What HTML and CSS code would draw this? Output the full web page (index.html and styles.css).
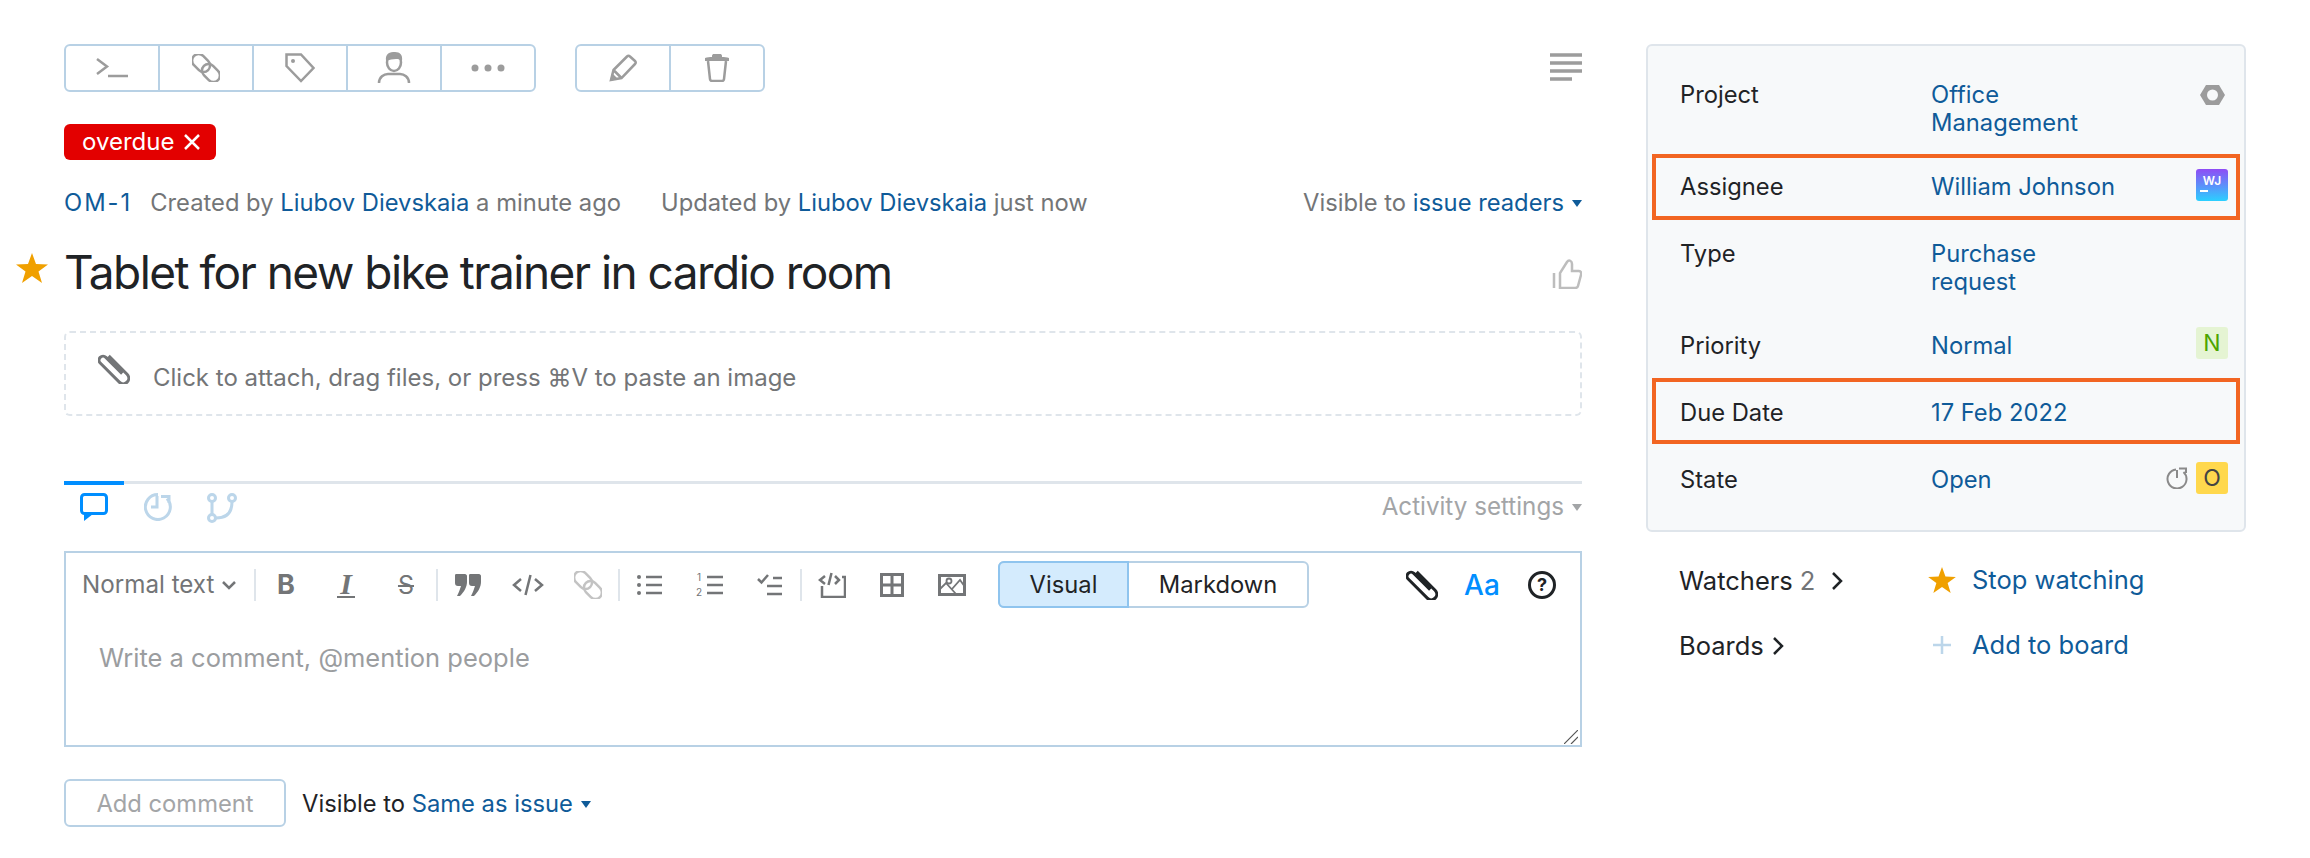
FILE: index.html
```html
<!DOCTYPE html>
<html lang="en">
<head>
<meta charset="utf-8">
<title>Tablet for new bike trainer in cardio room</title>
<link rel="stylesheet" href="styles.css">
</head>
<body>
<div class="page">
  <main class="main">
    <div class="topbar">
      <div class="groups">
        <div class="btn-group">
          <button class="tool"><svg width="32" height="20" viewBox="0 0 32 20"><path class="st" d="M1 1 11 8.500 1 16M12 18H32"/></svg></button>
          <button class="tool"><svg width="28" height="28" viewBox="0 0 28 28"><g class="st" transform="rotate(45 14 14)"><rect x="-3" y="7.500" width="20" height="13" rx="6.500"/><rect x="11" y="7.500" width="20" height="13" rx="6.500"/></g></svg></button>
          <button class="tool"><svg width="30" height="30" viewBox="0 0 30 30"><path class="st" d="M1.500 1.500H16L28.500 15 16 28 1.500 13Z"/><circle class="fl" cx="8" cy="8" r="2"/></svg></button>
          <button class="tool"><svg width="36" height="32" viewBox="0 0 36 32"><ellipse class="st" cx="18" cy="10.500" rx="7" ry="8.500"/><path class="fl" d="M10 9C9 1 14 0 19 0 24 0 27 3 26 9 23 6 16 7 10 9Z"/><path class="st" d="M3 31C3 25 8 22 12 22H24C28 22 33 25 33 31"/></svg></button>
          <button class="tool"><svg width="34" height="8" viewBox="0 0 34 8"><circle class="fl" cx="4" cy="4" r="3.500"/><circle class="fl" cx="17" cy="4" r="3.500"/><circle class="fl" cx="30" cy="4" r="3.500"/></svg></button>
        </div>
        <div class="btn-group">
          <button class="tool"><svg width="28" height="28" viewBox="0 0 28 28"><path class="st" d="M2 26 4.500 16 18 2.500C19 1.500 20 1.500 21 2.500L26 7C27 8 27 9 26 10L12.500 24ZM4.500 16 12.500 24"/><path class="fl" d="M1 27 3 19 9 25Z"/></svg></button>
          <button class="tool"><svg width="24" height="28" viewBox="0 0 24 28"><path class="fl" d="M0 4C2 3 5 3 7 3V2C7 .500 8 0 9 0H15C16 0 17 .500 17 2V3C19 3 22 3 24 4V7H0Z"/><path class="st" d="M3 7 5 25C5 26 6 27 7 27H17C18 27 19 26 19 25L21 7"/></svg></button>
        </div>
      </div>
      <svg class="doc-icon" width="32" height="30" viewBox="0 0 32 30"><path class="st doc-lines" d="M0 2H32M0 10H32M0 18H32M0 26H22"/></svg>
    </div>

    <div class="tags"><span class="tag">overdue<svg width="16" height="16" viewBox="0 0 16 16"><path d="M1 1 15 15M15 1 1 15"/></svg></span></div>

    <div class="meta">
      <a class="link issue-id">OM-1</a>
      <span class="muted created">Created by <a class="link">Liubov Dievskaia</a> a minute ago</span>
      <span class="muted updated">Updated by <a class="link">Liubov Dievskaia</a> just now</span>
      <span class="muted visible">Visible to <a class="link">issue readers</a><i class="caret"></i></span>
    </div>

    <div class="title-row">
      <svg class="star" width="32" height="30" viewBox="0 0 32 30"><polygon points="16,0 20,11 32,11.500 22.500,18.500 26,30 16,23 6,30 9.500,18.500 0,11.500 12,11"/></svg>
      <h1 class="title">Tablet for new bike trainer in cardio room</h1>
      <svg class="like" width="30" height="30" viewBox="0 0 30 30"><path d="M2 14V29M8 29V14L15 3C17 0 20 2 20 5V12H27C29 12 29.500 14 29 16L26 27C25.500 29 24 29 23 29Z"/></svg>
    </div>

    <div class="attach">
      <svg width="32" height="30" viewBox="0 0 32 30"><g transform="rotate(45 16 15) translate(-3 -1.500)"><path class="st st3" d="M6 11H32A5.500 5.500 0 0 1 32 22H5A4 4 0 0 1 5 14H28"/></g></svg>
      <span class="attach-text">Click to attach, drag files, or press ⌘V to paste an image</span>
    </div>

    <div class="tabs">
      <div class="tab-icons">
        <span class="tab tab-active"><svg width="28" height="28" viewBox="0 0 28 28"><rect x="1.500" y="1.500" width="25" height="19" rx="3" fill="none" stroke="#008eff" stroke-width="3"/><path fill="#008eff" d="M4 20V28L13 21Z"/></svg></span>
        <span class="tab"><svg width="28" height="28" viewBox="0 0 28 28"><path class="blue-st" d="M14 1.500A12.500 12.500 0 1 0 23 5.500M17 3.500H25V10M13 3V14H7"/></svg></span>
        <span class="tab"><svg width="30" height="30" viewBox="0 0 30 30"><g class="blue-st"><circle cx="5" cy="5" r="3.500"/><circle cx="25" cy="5" r="3.500"/><circle cx="5" cy="25" r="3.500"/><path d="M5 9V21M25 9C25 20 19 25 9 25"/></g></svg></span>
      </div>
      <span class="activity">Activity settings<i class="caret caret-light"></i></span>
    </div>

    <div class="editor">
      <div class="ed-toolbar">
        <div class="fmt">Normal text<svg width="14" height="10" viewBox="0 0 14 10"><path d="M1 2 7 8 13 2"/></svg></div>
        <i class="sep"></i>
        <span class="ed-btn glyph-b">B</span>
        <span class="ed-btn glyph-i"><span>I</span></span>
        <span class="ed-btn glyph-s">S</span>
        <i class="sep"></i>
        <span class="ed-btn"><svg width="26" height="22" viewBox="0 0 26 22"><path class="ed-fl" d="M1 0H10C11 0 12 1 12 2V8C12 13 9 18 5 22H2C4 18 5 15 6 12H3C1 12 0 11 0 9V2C0 1 0 0 1 0ZM15 0H24C25 0 26 1 26 2V8C26 13 23 18 19 22H16C18 18 19 15 20 12H17C15 12 14 11 14 9V2C14 1 14 0 15 0Z"/></svg></span>
        <span class="ed-btn"><svg width="32" height="24" viewBox="0 0 32 24"><path class="ed-st" d="M9 6 2 12 9 18M23 6 30 12 23 18M18.500 2 13.500 22"/></svg></span>
        <span class="ed-btn"><svg width="28" height="28" viewBox="0 0 28 28"><g class="ed-st off" transform="rotate(45 14 14)"><rect x="-3" y="7.500" width="20" height="13" rx="6.500"/><rect x="11" y="7.500" width="20" height="13" rx="6.500"/></g></svg></span>
        <i class="sep"></i>
        <span class="ed-btn"><svg width="26" height="22" viewBox="0 0 26 22"><path class="ed-st" d="M9 3H25M9 11H25M9 19H25"/><circle class="ed-fl" cx="2" cy="3" r="2"/><circle class="ed-fl" cx="2" cy="11" r="2"/><circle class="ed-fl" cx="2" cy="19" r="2"/></svg></span>
        <span class="ed-btn"><svg width="28" height="24" viewBox="0 0 28 24"><text class="mini" x="1" y="8">1</text><text class="mini" x="0" y="23">2</text><path class="ed-st" d="M11 4H27M11 12H27M11 20H27"/></svg></span>
        <span class="ed-btn"><svg width="26" height="24" viewBox="0 0 26 24"><path class="ed-st" d="M1 6 4.500 9.500 11 2M16 5H25M10 13H25M10 21H25"/></svg></span>
        <i class="sep"></i>
        <span class="ed-btn"><svg width="28" height="26" viewBox="0 0 28 26"><path class="ed-st" d="M7 4 2 8 7 12M17 4 21 8 17 12M13.500 1 10.500 13M24 5H27V25H4V14"/></svg></span>
        <span class="ed-btn"><svg width="24" height="24" viewBox="0 0 24 24"><path class="ed-st st3" d="M1.500 1.500H22.500V22.500H1.500ZM12 1.500V22.500M1.500 12H22.500"/></svg></span>
        <span class="ed-btn"><svg width="28" height="22" viewBox="0 0 28 22"><path class="ed-st st3" d="M1.500 1.500H26.500V20.500H1.500Z"/><path class="ed-st thin" d="M2 15 8 9 18 20M14 15 22 6 27 13"/><circle class="ed-st thin" cx="11" cy="7" r="2.500"/></svg></span>
        <div class="mode">
          <span class="mode-item mode-on">Visual</span>
          <span class="mode-item">Markdown</span>
        </div>
        <div class="ed-right">
          <span class="ed-btn"><svg width="32" height="30" viewBox="0 0 32 30"><g transform="rotate(45 16 15) translate(-3 -1.500)"><path class="clip" d="M6 11H32A5.500 5.500 0 0 1 32 22H5A4 4 0 0 1 5 14H28"/></g></svg></span>
          <span class="ed-btn aa">Aa</span>
          <span class="ed-btn"><span class="help">?</span></span>
        </div>
      </div>
      <div class="ed-body">Write a comment, @mention people</div>
      <svg class="grip" width="14" height="14" viewBox="0 0 14 14"><path d="M0 14 14 0M7 14 14 7"/></svg>
    </div>

    <div class="submit">
      <button class="add">Add comment</button>
      <span class="sub-vis">Visible to <a class="link">Same as issue</a><i class="caret"></i></span>
    </div>
  </main>

  <aside class="side">
    <div class="panel">
      <div class="field">
        <span>Project</span><a class="link">Office<br>Management</a>
        <span class="extra"><svg class="hex" width="25" height="20" viewBox="0 0 25 20"><polygon points="0,10 6,0 19,0 25,10 19,20 6,20" fill="#9c9c9c"/><circle cx="12.500" cy="10" r="5.500" fill="#f7f9fa"/></svg></span>
      </div>
      <div class="field field-hl gap-a">
        <span>Assignee</span><a class="link">William Johnson</a>
        <span class="extra"><span class="avatar">WJ<i></i></span></span>
      </div>
      <div class="field gap-b">
        <span>Type</span><a class="link">Purchase<br>request</a>
      </div>
      <div class="field gap-c">
        <span>Priority</span><a class="link">Normal</a>
        <span class="extra"><span class="badge badge-n">N</span></span>
      </div>
      <div class="field field-hl field-due gap-d">
        <span>Due Date</span><a class="link">17 Feb 2022</a>
      </div>
      <div class="field gap-e">
        <span>State</span><a class="link">Open</a>
        <span class="extra"><svg width="22" height="22" viewBox="0 0 22 22"><path class="clock" d="M10 2.500A9.500 9.500 0 1 0 17.500 5M13 1.500H20V6M11 3V11"/></svg><span class="badge badge-o">O</span></span>
      </div>
    </div>

    <div class="extras">
      <div class="ex-row">
        <span class="ex-left">Watchers <span class="count">2</span><svg class="chev chev-w" width="12" height="20" viewBox="0 0 12 20"><path d="M2 2 10 10 2 18"/></svg></span>
        <span class="ex-right"><svg class="ex-star" width="28" height="26" viewBox="0 0 32 30"><polygon points="16,0 20,11 32,11.500 22.500,18.500 26,30 16,23 6,30 9.500,18.500 0,11.500 12,11"/></svg><a class="link">Stop watching</a></span>
      </div>
      <div class="ex-row">
        <span class="ex-left">Boards<svg class="chev" width="12" height="20" viewBox="0 0 12 20"><path d="M2 2 10 10 2 18"/></svg></span>
        <span class="ex-right"><svg class="ex-plus" width="28" height="20" viewBox="0 0 28 20"><path d="M14 1V19M5 10H23"/></svg><a class="link">Add to board</a></span>
      </div>
    </div>
  </aside>
</div>
</body>
</html>
```

FILE: styles.css
```css
* { box-sizing: border-box; }
html, body { margin: 0; padding: 0; background: #fff; }
body { font-family: Inter, "Liberation Sans", sans-serif; font-size: 23.750px; line-height: 28px; color: #1f2326; overflow: hidden; }
a { color: #0f5b99; text-decoration: none; }
button { font: inherit; background: none; padding: 0; margin: 0; }

.page { display: flex; padding: 44px 0 0 64px; }
.main { width: 1518px; flex: none; }
.side { width: 600px; flex: none; margin-left: 64px; }

.st { fill: none; stroke: #9c9c9c; stroke-width: 2.5; }
.st3 { stroke-width: 3; stroke: #737577; }
.doc-lines { stroke-width: 3.5; }
.fl { fill: #9c9c9c; }

.topbar { display: flex; justify-content: space-between; align-items: flex-start; height: 48px; }
.groups { display: flex; gap: 39px; }
.btn-group { display: flex; height: 48px; border: 2px solid #b8d1e5; border-radius: 6px; }
.tool { width: 94px; border: 0; border-left: 2px solid #b8d1e5; display: flex; align-items: center; justify-content: center; }
.tool:first-child { width: 92px; border-left: 0; }
.doc-icon { margin-top: 9px; }

.tags { margin-top: 32px; display: flex; }
.tag { display: flex; align-items: center; height: 36px; width: 152px; padding-left: 18px; gap: 10px; background: #e30000; color: #fff; border-radius: 6px; font-size: 24px; }
.tag svg path { stroke: #fff; stroke-width: 2.5; fill: none; }

.meta { display: flex; height: 28px; margin-top: 29px; align-items: center; }
.issue-id { letter-spacing: 2px; }
.muted { color: #737577; }
.created { margin-left: 18px; }
.updated { margin-left: 40px; }
.visible { margin-left: auto; }
.caret { display: inline-block; width: 0; height: 0; margin-left: 8px; vertical-align: 4px; border: 5px solid transparent; border-top: 7px solid #0f5b99; border-bottom: 0; }
.caret-light { border-top-color: #a3a5a7; }

.title-row { display: flex; align-items: center; height: 60px; margin-top: 25px; }
.star { margin-left: -48px; margin-right: 16px; margin-bottom: 8px; flex: none; }
.star polygon, .ex-star polygon { fill: #f0a000; }
.title { margin: 0; font-size: 46px; letter-spacing: -1.550px; line-height: 60px; font-weight: 400; flex: 1; color: #1f2326; }
.like { margin-top: 4px; }
.like path { fill: none; stroke: #bdbdbd; stroke-width: 2.5; }

.attach { display: flex; align-items: center; gap: 23px; height: 85px; margin-top: 29px; padding-left: 32px; border: 2px dashed #dfe5eb; border-radius: 6px; color: #737577; font-size: 24px; }
.attach svg { margin-top: -10px; }
.attach-text { margin-top: 8px; }

.tabs { display: flex; justify-content: space-between; align-items: center; height: 70px; margin-top: 65px; border-top: 3px solid #dfe5eb; }
.tab-icons { display: flex; gap: 4px; align-self: stretch; }
.tab { width: 60px; margin-top: -3px; padding-top: 8px; display: flex; justify-content: center; border-top: 4px solid transparent; }
.tab-active { border-top-color: #008eff; }
.tab-icons .tab svg { flex: none; }
.blue-st, .blue-st * { fill: none; stroke: #bcd6ea; stroke-width: 3; }
.activity { color: #a3a5a7; margin-top: -21px; font-size: 24.200px; }

.editor { position: relative; height: 196px; border: 2px solid #b8d1e5; }
.ed-toolbar { display: flex; align-items: center; height: 47px; margin-top: 8px; padding-left: 16px; color: #737577; }
.fmt { width: 172px; flex: none; display: flex; align-items: center; gap: 8px; font-size: 24.200px; }
.fmt svg path { fill: none; stroke: #737577; stroke-width: 2.5; }
.sep { width: 2px; height: 32px; flex: none; background: #dfe5eb; }
.ed-btn { width: 60px; flex: none; display: flex; align-items: center; justify-content: center; }
.ed-st { fill: none; stroke: #737577; stroke-width: 2.5; }
.ed-st.st3 { stroke-width: 3; }
.ed-st.thin { stroke-width: 1.800; }
.ed-st.off { stroke: #c3c3c3; }
.ed-fl { fill: #737577; }
.mini { font-size: 10px; fill: #737577; font-family: Inter, sans-serif; }
.glyph-b { font-weight: 700; font-size: 27px; }
.glyph-i { font-family: "Liberation Serif", serif; font-style: italic; font-weight: 700; font-size: 30px; }
.glyph-i span { border-bottom: 2.500px solid #737577; line-height: 24px; padding: 0 3px; }
.glyph-s { text-decoration: line-through; text-decoration-thickness: 2px; font-size: 25px; }
.mode { display: flex; height: 47px; margin-left: 16px; border: 2px solid #b8d1e5; border-radius: 6px; color: #1f2326; flex: none; }
.mode-item { display: flex; align-items: center; justify-content: center; width: 178px; }
.mode-on { width: 131px; background: #d4ebfd; margin: -2px 0 -2px -2px; border: 2px solid #8fc4ee; border-radius: 6px 0 0 6px; }
.ed-right { display: flex; margin-left: auto; padding-right: 8px; }
.clip { fill: none; stroke: #1f2326; stroke-width: 3; }
.aa { color: #008eff; font-size: 28px; font-weight: 500; }
.help { display: flex; align-items: center; justify-content: center; width: 28px; height: 28px; border: 3px solid #1f2326; border-radius: 50%; color: #1f2326; font-size: 18px; font-weight: 700; }
.ed-body { margin: 36px 0 0 33px; color: #9b9d9f; font-size: 25.500px; }
.grip { position: absolute; right: 2px; bottom: 1px; }
.grip path { stroke: #555; stroke-width: 1.200; fill: none; }

.submit { display: flex; align-items: center; margin-top: 32px; }
.add { width: 222px; height: 48px; padding-top: 2px; border: 2px solid #b8d1e5; border-radius: 6px; color: #a3a5a7; }
.sub-vis { margin-left: 16px; padding-top: 2px; }

.panel { height: 488px; padding: 31px 4px 0; background: #f7f9fa; border: 2px solid #dfe5eb; border-radius: 6px; }
.field { display: grid; grid-template-columns: 250px 1fr auto; align-items: start; padding: 0 8px 0 24px; border: 4px solid transparent; }
.field > a { margin-left: 1px; }
.field-hl { border-color: #f26522; padding-top: 15px; padding-bottom: 15px; }
.field-due { padding-top: 17px; padding-bottom: 13px; }
.gap-a { margin-top: 13px; }
.gap-b { margin-top: 16px; }
.gap-c { margin-top: 28px; }
.gap-d { margin-top: 14px; }
.gap-e { margin-top: 18px; }
.extra { display: flex; align-items: center; gap: 8px; height: 28px; margin-top: -2px; }
.hex { margin: 4px 3px 0 0; }
.avatar { position: relative; width: 32px; height: 32px; border-radius: 3px; background: linear-gradient(#8f4cf5, #2bd0ff); color: #fff; font-size: 12px; line-height: 24px; font-weight: 600; text-align: center; }
.avatar i { position: absolute; left: 4px; bottom: 9px; width: 8px; height: 2px; background: #fff; }
.badge { display: flex; align-items: center; justify-content: center; width: 32px; height: 32px; border-radius: 3px; font-size: 23px; }
.badge-n { background: #e5f4d3; color: #4da400; margin-bottom: 2px; }
.badge-o { background: #ffd84d; color: #444; }
.clock { fill: none; stroke: #8a8a8a; stroke-width: 2; }

.extras { margin-top: 34px; padding-left: 33px; font-size: 25.500px; }
.ex-row { display: flex; height: 28px; margin-bottom: 37px; align-items: center; }
.ex-left { width: 249px; display: flex; align-items: center; padding-top: 2px; }
.count { color: #737577; margin-left: 7px; }
.chev { margin-left: 8px; }
.chev-w { margin-left: 16px; }
.chev path { fill: none; stroke: #1f2326; stroke-width: 2.5; }
.ex-right { display: flex; align-items: center; gap: 16px; }
.ex-plus path { fill: none; stroke: #bcd6ea; stroke-width: 2.500; }
```
